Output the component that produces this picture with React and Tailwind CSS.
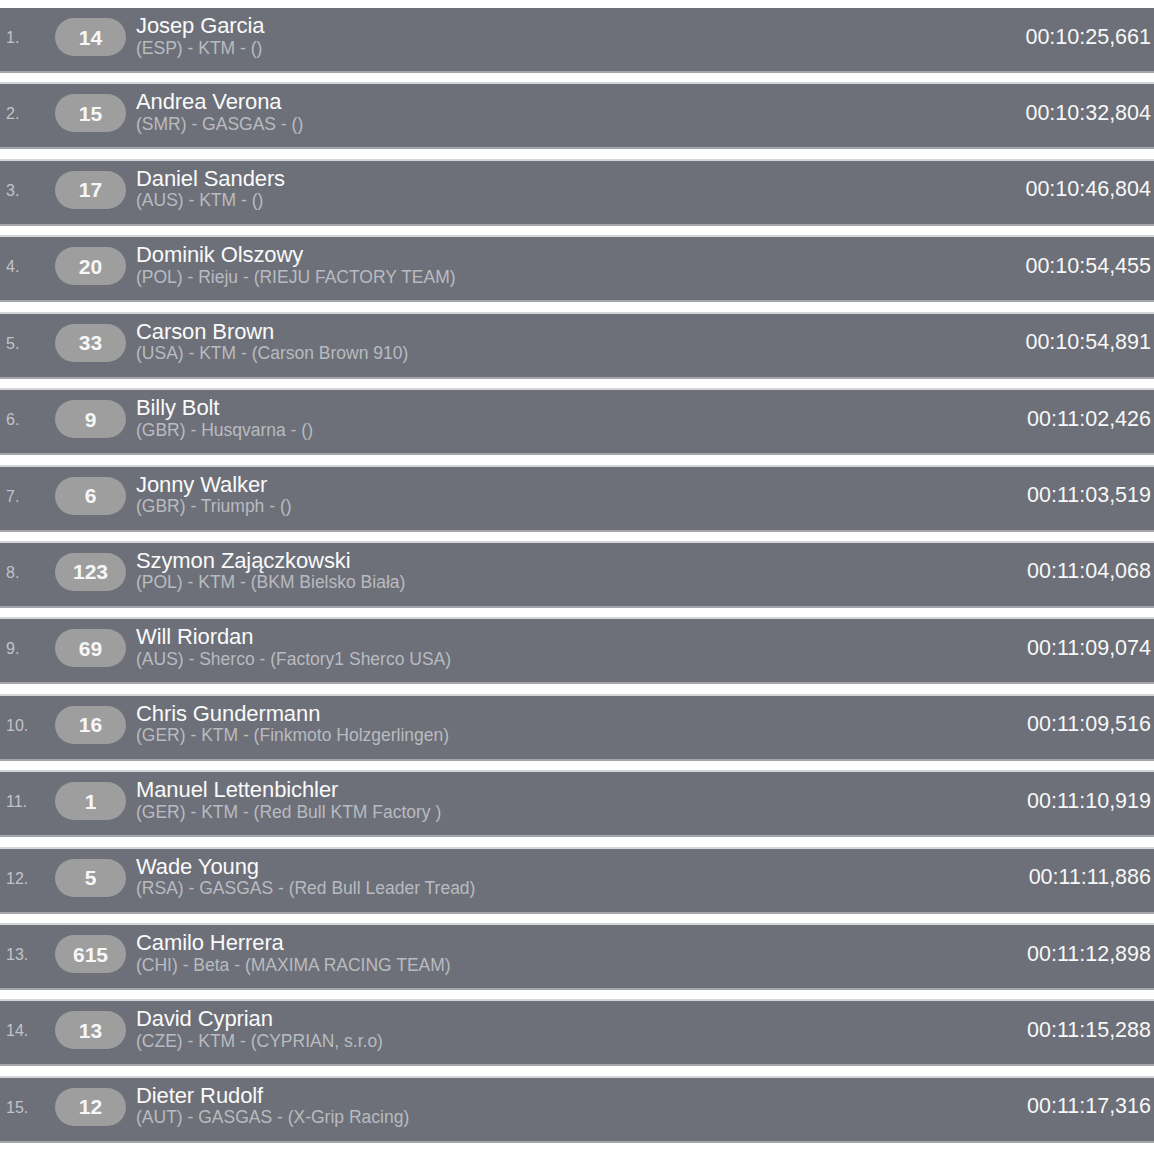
import React from "react";

const rows = [
  ["14", "Josep Garcia", "(ESP) - KTM - ()", "00:10:25,661"],
  ["15", "Andrea Verona", "(SMR) - GASGAS - ()", "00:10:32,804"],
  ["17", "Daniel Sanders", "(AUS) - KTM - ()", "00:10:46,804"],
  ["20", "Dominik Olszowy", "(POL) - Rieju - (RIEJU FACTORY TEAM)", "00:10:54,455"],
  ["33", "Carson Brown", "(USA) - KTM - (Carson Brown 910)", "00:10:54,891"],
  ["9", "Billy Bolt", "(GBR) - Husqvarna - ()", "00:11:02,426"],
  ["6", "Jonny Walker", "(GBR) - Triumph - ()", "00:11:03,519"],
  ["123", "Szymon Zajączkowski", "(POL) - KTM - (BKM Bielsko Biała)", "00:11:04,068"],
  ["69", "Will Riordan", "(AUS) - Sherco - (Factory1 Sherco USA)", "00:11:09,074"],
  ["16", "Chris Gundermann", "(GER) - KTM - (Finkmoto Holzgerlingen)", "00:11:09,516"],
  ["1", "Manuel Lettenbichler", "(GER) - KTM - (Red Bull KTM Factory )", "00:11:10,919"],
  ["5", "Wade Young", "(RSA) - GASGAS - (Red Bull Leader Tread)", "00:11:11,886"],
  ["615", "Camilo Herrera", "(CHI) - Beta - (MAXIMA RACING TEAM)", "00:11:12,898"],
  ["13", "David Cyprian", "(CZE) - KTM - (CYPRIAN, s.r.o)", "00:11:15,288"],
  ["12", "Dieter Rudolf", "(AUT) - GASGAS - (X-Grip Racing)", "00:11:17,316"],
];

export default function App() {
  return (
    <div
      className="w-[1154px] h-[1154px] bg-white overflow-hidden pt-[8px] flex flex-col gap-[11.43px]"
      style={{ fontFamily: '"Liberation Sans", Arial, sans-serif' }}
    >
      {rows.map(([num, name, sub, time], i) => (
        <div
          key={i}
          className="relative h-[65px] shrink-0 bg-[#6d7079] border-b-[2px] border-[#a4a6ac] flex items-start"
        >
          {i > 0 && (
            <div className="absolute left-0 right-0 top-[-2px] h-[2px] bg-[#d4d5d8]" />
          )}
          <div className="w-[55px] pl-[6px] mt-[22px] text-[16px] leading-none text-[#c2c3c8]">
            {i + 1}.
          </div>
          <div className="mt-[10px] w-[71px] h-[38px] rounded-full bg-[#9e9e9f] flex items-center justify-center text-[21px] font-bold leading-none text-[#f7f7f7]">
            {num}
          </div>
          <div className="ml-[10px] mt-[7px] flex flex-col">
            <div className="text-[22px] leading-none text-[#fafafa] tracking-[-0.1px]">{name}</div>
            <div className="mt-[2.5px] text-[17.5px] leading-none text-[#b9bbc0]">{sub}</div>
          </div>
          <div className="ml-auto mt-[18.5px] pr-[3px] text-[21.5px] leading-none text-[#f8f8f8]">
            {time}
          </div>
        </div>
      ))}
    </div>
  );
}
